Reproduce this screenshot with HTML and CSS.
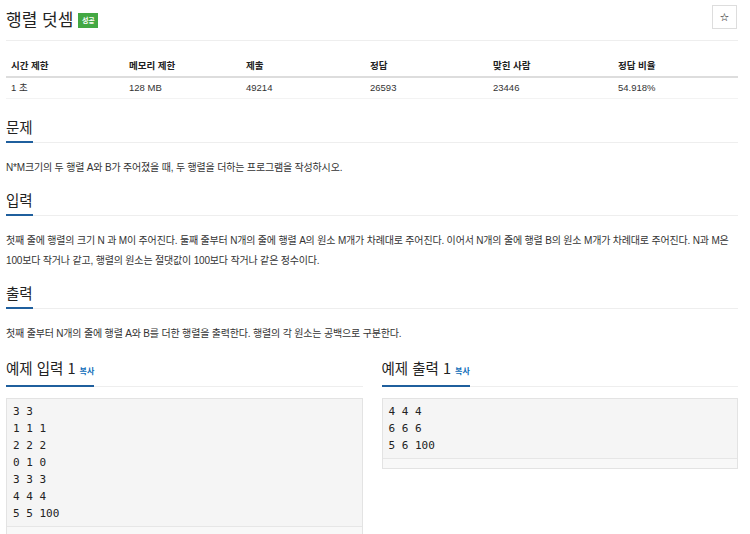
FILE: index.html
```html
<!DOCTYPE html>
<html lang="ko">
<head>
<meta charset="utf-8">
<link rel="stylesheet" href="styles.css">
</head>
<body>
<div class="page">
  <div class="title-bar">
    <h1 class="title">행렬 덧셈 <span class="badge">성공</span></h1>
    <button class="star">☆</button>
  </div>

  <div class="info">
    <div class="info-row head">
      <div>시간 제한</div><div>메모리 제한</div><div>제출</div><div>정답</div><div>맞힌 사람</div><div>정답 비율</div>
    </div>
    <div class="info-row">
      <div>1 초</div><div>128 MB</div><div>49214</div><div>26593</div><div>23446</div><div>54.918%</div>
    </div>
  </div>

  <section class="sec">
    <div class="headline"><h2>문제</h2></div>
    <p class="text">N*M크기의 두 행렬 A와 B가 주어졌을 때, 두 행렬을 더하는 프로그램을 작성하시오.</p>
  </section>

  <section class="sec">
    <div class="headline"><h2>입력</h2></div>
    <p class="text">첫째 줄에 행렬의 크기 N 과 M이 주어진다. 둘째 줄부터 N개의 줄에 행렬 A의 원소 M개가 차례대로 주어진다. 이어서 N개의 줄에 행렬 B의 원소 M개가 차례대로 주어진다. N과 M은 100보다 작거나 같고, 행렬의 원소는 절댓값이 100보다 작거나 같은 정수이다.</p>
  </section>

  <section class="sec">
    <div class="headline"><h2>출력</h2></div>
    <p class="text">첫째 줄부터 N개의 줄에 행렬 A와 B를 더한 행렬을 출력한다. 행렬의 각 원소는 공백으로 구분한다.</p>
  </section>

  <div class="samples">
    <div class="sample">
      <div class="headline"><h2>예제 입력 1 <a class="copy">복사</a></h2></div>
      <div class="pre"><pre>3 3
1 1 1
2 2 2
0 1 0
3 3 3
4 4 4
5 5 100</pre><div class="scroll"></div></div>
    </div>
    <div class="sample">
      <div class="headline"><h2>예제 출력 1 <a class="copy">복사</a></h2></div>
      <div class="pre"><pre>4 4 4
6 6 6
5 6 100</pre><div class="scroll"></div></div>
    </div>
  </div>
</div>
</body>
</html>
```

FILE: styles.css
```css
* { box-sizing: border-box; }
html, body { margin: 0; padding: 0; background: #fff; }
body {
  font-family: "Liberation Sans", "Noto Sans CJK KR", sans-serif;
  color: #333;
  overflow: hidden;
}
.page { padding: 0 12px 0 6px; }

.title-bar {
  display: flex;
  justify-content: space-between;
  align-items: flex-start;
  height: 41px;
  border-bottom: 1px solid #eee;
  padding-top: 5px;
}
.title {
  margin: 0;
  font-family: "Noto Sans CJK KR", sans-serif;
  font-weight: 400;
  font-size: 17px;
  line-height: 28px;
  color: #222;
  display: flex;
  align-items: center;
  gap: 5px;
}
.badge {
  display: inline-block;
  background: #43a843;
  color: #fff;
  font-size: 7px;
  font-weight: 700;
  line-height: 15px;
  height: 15px;
  width: 20px;
  text-align: center;
  margin-top: 2px;
}
.star {
  width: 25px;
  height: 24px;
  margin-right: 1px;
  border: 1px solid #ddd;
  background: #fff;
  font-size: 11px;
  color: #000;
  padding: 0;
  font-family: "DejaVu Sans", sans-serif;
}

.info { margin-top: 12px; }
.info-row {
  display: grid;
  grid-template-columns: 118px 117px 124px 123px 125px 1fr;
  font-size: 9.5px;
  color: #333;
}
.info-row > div { padding: 0 5px; }
.info-row.head {
  font-weight: 700;
  height: 25px;
  line-height: 25px;
  border-bottom: 2px solid #ddd;
  color: #222;
}
.info-row:not(.head) {
  height: 21px;
  line-height: 20px;
  border-bottom: 1px solid #f3f3f3;
}

.sec { margin-top: 17px; }
.headline {
  border-bottom: 1px solid #eee;
  display: flex;
}
.headline h2 {
  margin: 0;
  font-family: "Noto Sans CJK KR", sans-serif;
  font-weight: 400;
  font-size: 14.5px;
  line-height: 22px;
  color: #222;
  border-bottom: 2px solid #1f5f9d;
  margin-bottom: -1px;
  padding-bottom: 3px;
}
.text {
  margin: 15px 0 0;
  font-size: 10px;
  letter-spacing: -0.18px;
  line-height: 20px;
  color: #333;
}
.sec + .sec { margin-top: 11px; }

.samples {
  display: grid;
  grid-template-columns: 1fr 1fr;
  column-gap: 19px;
  margin-top: 13px;
}
.copy {
  font-size: 8px;
  font-weight: 700;
  color: #0b6bb8;
  font-family: "Noto Sans CJK KR", sans-serif;
}
.pre {
  margin-top: 11px;
  border: 1px solid #e3e3e3;
  background: #f5f5f5;
}
.pre pre {
  margin: 0;
  padding: 4px 6px 4px;
  font-family: "DejaVu Sans Mono", monospace;
  font-size: 11px;
  line-height: 17px;
  color: #222;
}
.scroll {
  height: 10px;
  border-top: 1px solid #e6e6e6;
  background: #f8f8f8;
}
```
